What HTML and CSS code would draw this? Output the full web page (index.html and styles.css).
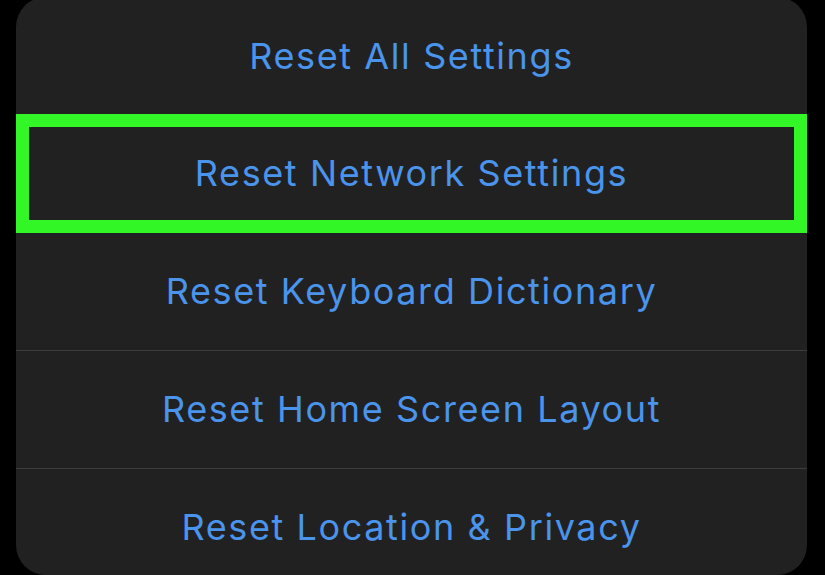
FILE: index.html
```html
<!DOCTYPE html>
<html lang="en">
<head>
    <meta charset="UTF-8">
    <meta name="viewport" content="width=device-width, initial-scale=1.0">
    <title>Reset</title>
    <link rel="stylesheet" href="styles.css">
</head>
<body>
    <div class="sheet">
        <div class="row">Reset All Settings</div>
        <div class="row highlighted">Reset Network Settings</div>
        <div class="row">Reset Keyboard Dictionary</div>
        <div class="row">Reset Home Screen Layout</div>
        <div class="row">Reset Location &amp; Privacy</div>
    </div>
</body>
</html>
```

FILE: styles.css
```css
body {
    margin: 0;
    padding: 0;
    background: #000;
    font-family: Inter, "Noto Sans", sans-serif;
    height: 575px;
    overflow: hidden;
}

.sheet {
    width: 791px;
    height: 578px;
    margin: -3px 0 0 16px;
    background: #212121;
    border-radius: 30px;
    overflow: hidden;
    display: flex;
    flex-direction: column;
}

.row {
    flex: 0 0 117.5px;
    box-sizing: border-box;
    display: flex;
    align-items: center;
    justify-content: center;
    border-top: 1.5px solid #3c3c3e;
    color: #4a94ec;
    font-size: 36px;
    letter-spacing: 1.6px;
}

.row:first-child {
    border-top: none;
}

.highlighted {
    flex-basis: 119px;
    border: 13px solid #33f626;
    margin-top: -1px;
}

.highlighted + .row {
    border-top: none;
}
```
